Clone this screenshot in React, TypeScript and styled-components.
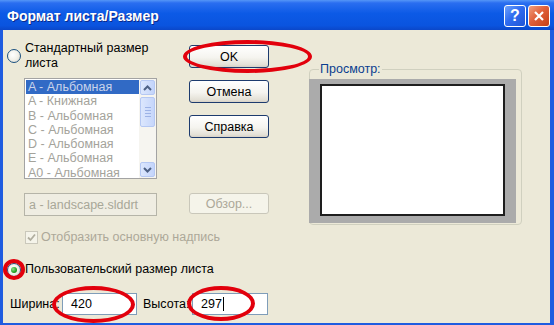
import React from "react";
import styled, { createGlobalStyle } from "styled-components";

const GlobalStyle = createGlobalStyle`
  html, body { margin: 0; padding: 0; background: #ffffff; }
  * { box-sizing: border-box; }
`;

const FONT = `"Liberation Sans", Arial, sans-serif`;

const Window = styled.div`
  width: 554px;
  height: 325px;
  display: flex;
  flex-direction: column;
  font-family: ${FONT};
  font-size: 12.5px;
  color: #000;
  overflow: hidden;
`;

const TitleBar = styled.div`
  height: 30px;
  flex: none;
  display: flex;
  align-items: center;
  padding: 0 4px 0 7px;
  background: linear-gradient(
    to bottom,
    #5596f7 0%,
    #2a6ef0 10%,
    #0c5ae6 45%,
    #0a54df 85%,
    #0b47c9 100%
  );
`;

const Title = styled.div`
  flex: 1;
  color: #fff;
  font-weight: bold;
  font-size: 14px;
  text-shadow: 1px 1px 0 #0b2a8a;
  padding-top: 1px;
`;

const CaptionButtons = styled.div`
  display: flex;
  gap: 2px;
  margin-top: 2px;
`;

const CaptionButton = styled.div<{ $kind: "help" | "close" }>`
  width: 22px;
  height: 22px;
  border: 1px solid #fff;
  border-radius: 3px;
  display: flex;
  align-items: center;
  justify-content: center;
  color: #fff;
  font-weight: bold;
  font-size: 16px;
  background: ${(p) =>
    p.$kind === "help"
      ? "linear-gradient(135deg, #6fa2fb 0%, #2f6cf0 45%, #1f54d6 100%)"
      : "linear-gradient(135deg, #f0a07e 0%, #e0603a 45%, #c73f16 100%)"};
`;

const Body = styled.div`
  flex: 1;
  background: #ece9d8;
  border-left: 3px solid #1f5ce0;
  border-right: 4px solid #1f5ce0;
  border-bottom: 2px solid #1f5ce0;
  padding: 11px 0 0 4px;
  display: flex;
  flex-direction: column;
`;

const MainGrid = styled.div`
  display: grid;
  grid-template-columns: 182px 120px 213px;
  grid-template-rows: auto auto auto;
  row-gap: 14px;
  align-items: start;
`;

const LeftTop = styled.div`
  grid-column: 1;
  grid-row: 1;
  display: flex;
  flex-direction: column;
`;

const OptionRow = styled.label`
  display: flex;
  align-items: center;
  gap: 4px;
  line-height: 15px;
  position: relative;
`;

const RadioWrap = styled.span`
  position: relative;
  display: inline-flex;
`;

const Radio = styled.span<{ $checked?: boolean }>`
  width: 14px;
  height: 14px;
  border-radius: 50%;
  border: 1px solid #1c5180;
  background: radial-gradient(circle at 40% 40%, #ffffff 0%, #f2f1ea 50%, #d6d3c6 100%);
  display: inline-flex;
  align-items: center;
  justify-content: center;
  flex: none;
  &::after {
    content: "";
    display: ${(p) => (p.$checked ? "block" : "none")};
    width: 6px;
    height: 6px;
    border-radius: 50%;
    background: radial-gradient(circle at 35% 35%, #8fe08f 0%, #21a121 60%, #117011 100%);
  }
`;

const ListBox = styled.div`
  margin: 7px 0 0 17px;
  width: 133px;
  height: 101px;
  border: 1px solid #a3a3a3;
  background: #fff;
  display: flex;
  overflow: hidden;
`;

const ListItems = styled.div`
  flex: 1;
  padding: 1px 0 0 1px;
  overflow: hidden;
`;

const ListItem = styled.div<{ $selected?: boolean }>`
  height: 14.3px;
  line-height: 14.3px;
  padding-left: 2px;
  white-space: nowrap;
  color: ${(p) => (p.$selected ? "#c9d3ea" : "#a4a39b")};
  background: ${(p) => (p.$selected ? "#316ac5" : "transparent")};
`;

const ScrollBar = styled.div`
  width: 17px;
  flex: none;
  background: #f6f5f0;
  display: flex;
  flex-direction: column;
  padding: 1px 0;
`;

const ScrollArrow = styled.div`
  height: 15px;
  margin: 0 1px;
  border: 1px solid #b5c8f3;
  border-radius: 2px;
  background: linear-gradient(to right, #dce7fd, #c3d4fb);
  display: flex;
  align-items: center;
  justify-content: center;
`;

const ScrollTrack = styled.div`
  flex: 1;
  padding: 2px 1px;
  display: flex;
  flex-direction: column;
`;

const ScrollThumb = styled.div`
  height: 30px;
  border: 1px solid #b5c8f3;
  border-radius: 2px;
  background: linear-gradient(to right, #dce7fd, #c6d6fb);
  display: flex;
  flex-direction: column;
  align-items: center;
  justify-content: center;
  gap: 2px;
`;

const Grip = styled.span`
  width: 6px;
  height: 1px;
  background: #9db3e6;
`;

const ButtonStack = styled.div`
  grid-column: 2;
  grid-row: 1;
  margin-top: 4px;
  display: flex;
  flex-direction: column;
  gap: 12px;
`;

const Annotated = styled.div`
  position: relative;
  display: inline-flex;
`;

const Ellipse = styled.span<{ $t: number; $r: number; $b: number; $l: number }>`
  position: absolute;
  top: ${(p) => p.$t}px;
  right: ${(p) => p.$r}px;
  bottom: ${(p) => p.$b}px;
  left: ${(p) => p.$l}px;
  border: 4px solid #e2000c;
  border-radius: 50%;
  pointer-events: none;
  z-index: 2;
`;

const Button = styled.button<{ $disabled?: boolean; $height?: number }>`
  width: 80px;
  height: ${(p) => p.$height ?? 23}px;
  font-family: ${FONT};
  font-size: 12.5px;
  padding: 0;
  border-radius: 3px;
  border: 1px solid ${(p) => (p.$disabled ? "#c9c7ba" : "#1d3b6e")};
  color: ${(p) => (p.$disabled ? "#aca899" : "#000")};
  background: ${(p) =>
    p.$disabled
      ? "#f5f4ea"
      : "linear-gradient(to bottom, #ffffff 0%, #f5f4ef 55%, #e3e0d6 90%, #d6d0c5 100%)"};
`;

const PreviewGroup = styled.div`
  grid-column: 3;
  grid-row: 1 / span 3;
  margin-top: 28px;
  height: 156px;
  position: relative;
  border: 1px solid #d0d0bf;
  border-radius: 4px;
  padding: 9px 0 0 0;
`;

const GroupLabel = styled.span`
  position: absolute;
  top: -8px;
  left: 9px;
  padding: 0 1px;
  background: #ece9d8;
  color: #0a3d8f;
  line-height: 15px;
`;

const PreviewFrame = styled.div`
  margin-left: -1px;
  width: 207px;
  height: 144px;
  background: #ababab;
  padding: 5px 11px 7px 11px;
`;

const PreviewPaper = styled.div`
  width: 100%;
  height: 100%;
  background: #fff;
  border: 2px solid #1e1e1e;
`;

const TemplateField = styled.div`
  grid-column: 1;
  grid-row: 2;
  margin-left: 17px;
  width: 133px;
  height: 23px;
  border: 1px solid #b5b4a8;
  background: #efede2;
  color: #a8a798;
  padding-left: 4px;
  display: flex;
  align-items: center;
`;

const BrowseCell = styled.div`
  grid-column: 2;
  grid-row: 2;
`;

const CheckRow = styled.div`
  grid-column: 1 / span 2;
  grid-row: 3;
  margin-left: 18px;
  display: flex;
  align-items: center;
  gap: 3px;
  color: #aca899;
  line-height: 15px;
`;

const CheckBox = styled.span`
  width: 13px;
  height: 13px;
  border: 1px solid #cac8bb;
  background: #f5f4ea;
  display: inline-flex;
  align-items: center;
  justify-content: center;
`;

const CustomRow = styled.div`
  margin-top: 17px;
`;

const DimsRow = styled.div`
  margin-top: 16px;
  display: flex;
  align-items: center;
`;

const DimLabel = styled.span<{ $w: number; $pl?: number }>`
  width: ${(p) => p.$w}px;
  padding-left: ${(p) => p.$pl ?? 0}px;
  white-space: nowrap;
`;

const Input = styled.div<{ $w: number }>`
  width: ${(p) => p.$w}px;
  height: 22px;
  border: 1px solid #7f9db9;
  background: #fff;
  padding-left: 8px;
  display: flex;
  align-items: center;
`;

const Caret = styled.span`
  display: inline-block;
  width: 1px;
  height: 14px;
  background: #000;
  margin-left: 1px;
`;

const Chevron = ({ up }: { up?: boolean }) => (
  <svg width="9" height="6" viewBox="0 0 9 6">
    <polyline
      points={up ? "1,5 4.5,1.5 8,5" : "1,1 4.5,4.5 8,1"}
      fill="none"
      stroke="#4d6185"
      strokeWidth="2"
    />
  </svg>
);

const items = [
  "A - Альбомная",
  "A - Книжная",
  "B - Альбомная",
  "C - Альбомная",
  "D - Альбомная",
  "E - Альбомная",
  "A0 - Альбомная",
];

export default function App() {
  return (
    <>
      <GlobalStyle />
      <Window>
        <TitleBar>
          <Title>Формат листа/Размер</Title>
          <CaptionButtons>
            <CaptionButton $kind="help">?</CaptionButton>
            <CaptionButton $kind="close">
              <svg width="12" height="12" viewBox="0 0 12 12">
                <path d="M2 2 L10 10 M10 2 L2 10" stroke="#fff" strokeWidth="2.2" />
              </svg>
            </CaptionButton>
          </CaptionButtons>
        </TitleBar>
        <Body>
          <MainGrid>
            <LeftTop>
              <OptionRow>
                <Radio />
                <span>
                  Стандартный размер
                  <br />
                  листа
                </span>
              </OptionRow>
              <ListBox>
                <ListItems>
                  {items.map((t, i) => (
                    <ListItem key={t} $selected={i === 0}>
                      {t}
                    </ListItem>
                  ))}
                </ListItems>
                <ScrollBar>
                  <ScrollArrow>
                    <Chevron up />
                  </ScrollArrow>
                  <ScrollTrack>
                    <ScrollThumb>
                      <Grip />
                      <Grip />
                      <Grip />
                      <Grip />
                    </ScrollThumb>
                  </ScrollTrack>
                  <ScrollArrow>
                    <Chevron />
                  </ScrollArrow>
                </ScrollBar>
              </ListBox>
            </LeftTop>

            <ButtonStack>
              <Annotated>
                <Button>OK</Button>
                <Ellipse $t={-5} $r={-3} $b={-5} $l={-6} />
              </Annotated>
              <Button>Отмена</Button>
              <Button>Справка</Button>
            </ButtonStack>

            <PreviewGroup>
              <GroupLabel>Просмотр:</GroupLabel>
              <PreviewFrame>
                <PreviewPaper />
              </PreviewFrame>
            </PreviewGroup>

            <TemplateField>a - landscape.slddrt</TemplateField>
            <BrowseCell>
              <Button $disabled $height={21}>
                Обзор...
              </Button>
            </BrowseCell>

            <CheckRow>
              <CheckBox>
                <svg width="9" height="9" viewBox="0 0 9 9">
                  <polyline points="1,4.5 3.5,7 8,1.5" fill="none" stroke="#b0ae9f" strokeWidth="1.8" />
                </svg>
              </CheckBox>
              <span>Отобразить основную надпись</span>
            </CheckRow>
          </MainGrid>

          <CustomRow>
            <OptionRow>
              <RadioWrap>
                <Radio $checked />
                <Ellipse $t={-4} $r={-4} $b={-3} $l={-4} />
              </RadioWrap>
              <span>Пользовательский размер листа</span>
            </OptionRow>
          </CustomRow>

          <DimsRow>
            <DimLabel $w={55} $pl={3}>Ширина:</DimLabel>
            <Annotated>
              <Input $w={75}>420</Input>
              <Ellipse $t={-7} $r={2} $b={-8} $l={-10} />
            </Annotated>
            <DimLabel $w={55} $pl={6}>Высота:</DimLabel>
            <Annotated>
              <Input $w={76}>
                297
                <Caret />
              </Input>
              <Ellipse $t={-7} $r={13} $b={-6} $l={-5} />
            </Annotated>
          </DimsRow>
        </Body>
      </Window>
    </>
  );
}
